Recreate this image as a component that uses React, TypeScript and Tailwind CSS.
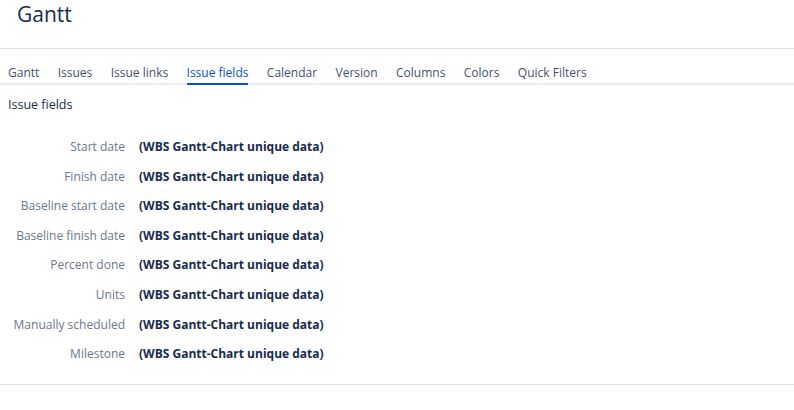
import React from "react";

const tabs = [
  "Gantt",
  "Issues",
  "Issue links",
  "Issue fields",
  "Calendar",
  "Version",
  "Columns",
  "Colors",
  "Quick Filters",
];

const fields = [
  "Start date",
  "Finish date",
  "Baseline start date",
  "Baseline finish date",
  "Percent done",
  "Units",
  "Manually scheduled",
  "Milestone",
];

export default function App() {
  const active = "Issue fields";

  return (
    <div
      className="w-[794px] h-[410px] bg-white text-[#172b4d] overflow-hidden"
      style={{ fontFamily: '"Open Sans", "Noto Sans", sans-serif' }}
    >
      {/* HEADER */}
      <div className="h-[49px] px-[17px] pt-[2px] border-b border-[#dfe1e6]">
        <h1 className="text-[21px] leading-[24px] font-normal text-[#172b4d]">Gantt</h1>
      </div>

      {/* TABS */}
      <div className="mt-[15px] flex gap-[18.4px] px-[8px] border-b-2 border-[#ebecf0]">
        {tabs.map((t) => (
          <div
            key={t}
            className={`text-[12px] leading-[18px] pb-[1px] -mb-[2px] border-b-2 ${
              t === active
                ? "text-[#0052cc] border-[#0052cc]"
                : "text-[#42526e] border-transparent"
            }`}
          >
            {t}
          </div>
        ))}
      </div>

      {/* SECTION */}
      <div className="px-[8px] pt-[11px] text-[12.5px] leading-[18px] text-[#172b4d]">
        Issue fields
      </div>

      <div className="mt-[24px] flex flex-col gap-[11.6px] pb-[21px] border-b border-[#dfe1e6]">
        {fields.map((f) => (
          <div key={f} className="flex items-center text-[12px] leading-[18px]">
            <div className="w-[125px] text-right text-[#6b778c] whitespace-nowrap">{f}</div>
            <div className="ml-[14px] font-bold text-[#172b4d] whitespace-nowrap">
              (WBS Gantt-Chart unique data)
            </div>
          </div>
        ))}
      </div>
    </div>
  );
}
